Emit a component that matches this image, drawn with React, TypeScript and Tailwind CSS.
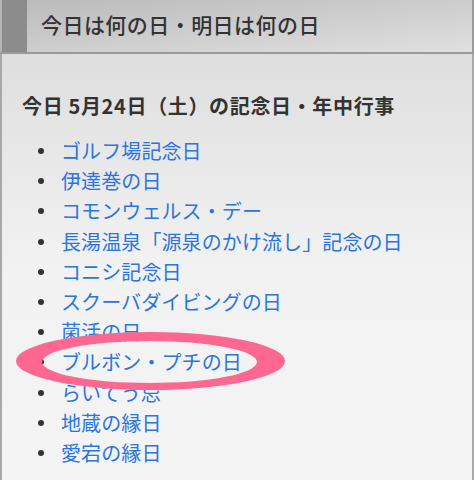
const items = [
  "ゴルフ場記念日",
  "伊達巻の日",
  "コモンウェルス・デー",
  "長湯温泉「源泉のかけ流し」記念の日",
  "コニシ記念日",
  "スクーバダイビングの日",
  "菌活の日",
  "ブルボン・プチの日",
  "らいてう忌",
  "地蔵の縁日",
  "愛宕の縁日",
];

export default function App() {
  return (
    <div
      className="relative w-[474px] h-[480px] overflow-hidden bg-[#f4f4f4] text-[#333]"
      style={{ fontFamily: '"Noto Sans CJK JP", "Noto Sans", sans-serif' }}
    >
      <div className="flex h-[54px] border-b-2 border-r-2 border-[#9a9a9a] bg-gradient-to-br from-[#bababa] to-[#e0e0e0]">
        <div className="w-[27px] border-l-2 border-[#b4b4b4] bg-[#8c8c8c]" />
        <h2 className="flex items-center pl-[14px] pb-[2px] text-[21px] font-medium tracking-[0.45px]">
          今日は何の日・明日は何の日
        </h2>
      </div>

      <div className="h-[426px] border-l-2 border-r-2 border-[#a8a8a8] bg-gradient-to-b from-[#dedede] via-[#f2f2f2] to-[#f4f4f4] pl-[20px] pt-[38px]">
        <h3 className="text-[20px] font-bold leading-[28px] tracking-[0.65px]">今日 5月24日（土）の記念日・年中行事</h3>
        <ul className="mt-[16px] pl-[16px]">
          {items.map((t) => (
            <li key={t} className="flex items-center h-[30.2px]">
              <span className="w-[6px] h-[6px] rounded-full bg-[#333] mr-[17px]" />
              <a href="#" className="text-[20px] leading-[30px] tracking-[0.1px] text-[#2a75de]">
                {t}
              </a>
            </li>
          ))}
        </ul>
      </div>

      <svg className="absolute left-0 top-0" width="474" height="480" viewBox="0 0 474 480">
        <path
          fillRule="evenodd"
          fill="#fd6790"
          d="M16 361 a134.5 29 0 1 0 269 0 a134.5 29 0 1 0 -269 0 Z M42 362 a107.5 21 0 1 0 215 0 a107.5 21 0 1 0 -215 0 Z"
        />
      </svg>
    </div>
  );
}
